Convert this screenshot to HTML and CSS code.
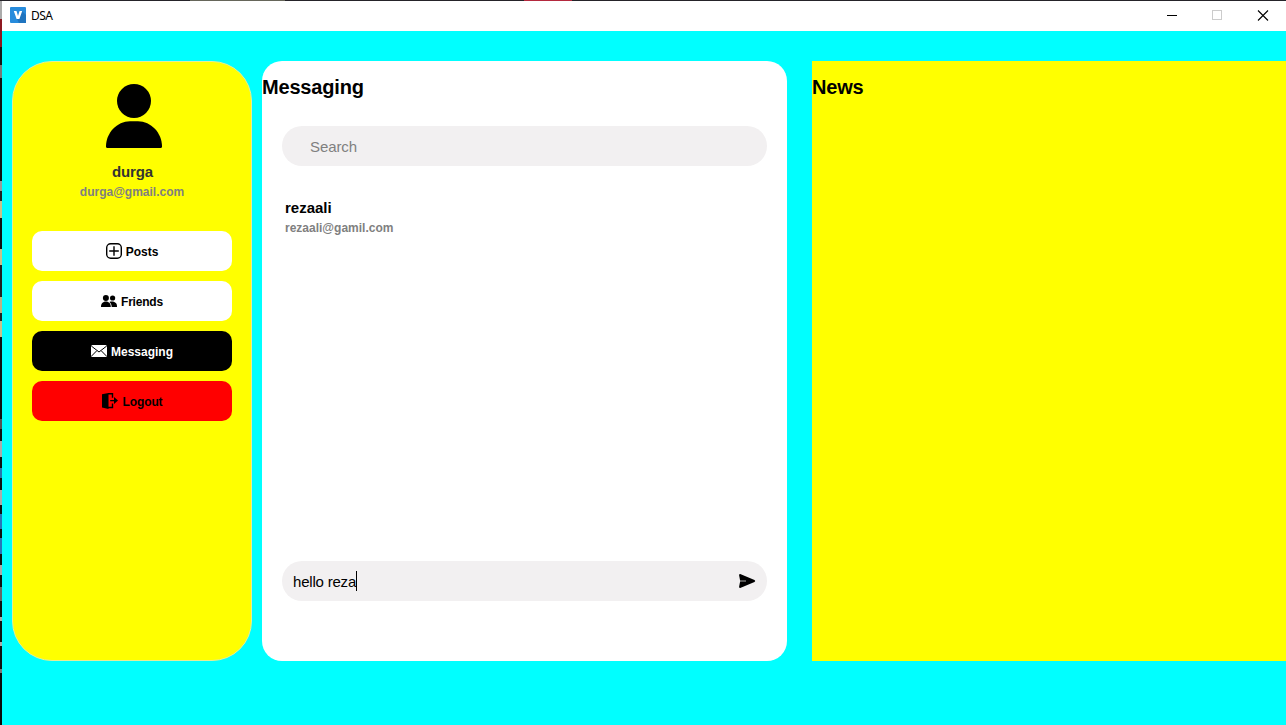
FILE: index.html
```html
<!DOCTYPE html>
<html lang="en">
<head>
<meta charset="utf-8">
<title>DSA</title>
<link rel="stylesheet" href="styles.css">
</head>
<body>
<div class="desktop">
  <div class="desktop-top"></div>
  <div class="row">
    <div class="desktop-left"></div>
    <div class="window">
      <header class="titlebar">
        <svg class="app-icon" width="16" height="16" viewBox="0 0 16 16"><rect width="16" height="16" rx="1" fill="#268bdc"/><path d="M12 4l4 4v8H9l-2-4z" fill="#1f74bf"/><path d="M3.800 4h2.700L8 9l1.600-5h2.600L9.400 12H6.600z" fill="#fff"/></svg>
        <span class="app-name">DSA</span>
        <svg class="controls" width="138" height="30" viewBox="0 0 138 30" shape-rendering="crispEdges"><path d="M19 14.5h10" stroke="#000"/><rect x="64.5" y="9.5" width="9" height="9" fill="none" stroke="#ccc"/><path d="M110 9.5l10 10M120 9.5l-10 10" stroke="#000" stroke-width="1.1" shape-rendering="auto"/></svg>
      </header>
      <main class="content">
        <aside class="sidebar">
          <svg class="avatar" width="56" height="64" viewBox="0 0 56 64"><circle cx="28" cy="17" r="17"/><path d="M0 62.5C0 49 11 37.3 24 37.3h8C45 37.3 56 49 56 62.5Q56 64 54.5 64h-53Q0 64 0 62.5z"/></svg>
          <div class="user-name">durga</div>
          <div class="user-mail">durga@gmail.com</div>
          <nav class="menu">
            <button class="item"><svg width="16" height="16" viewBox="0 0 16 16" fill="none" stroke="#000"><rect x=".7" y=".7" width="14.6" height="14.6" rx="4" stroke-width="1.4"/><path d="M8 3.2v9.6M3.2 8h9.6" stroke-width="1.4"/></svg><span class="label">Posts</span></button>
            <button class="item friends"><svg width="16" height="16" viewBox="0 0 16 16"><circle cx="4.900" cy="5" r="3"/><circle cx="11.600" cy="5" r="2.600"/><path d="M0 14c0-3 1.700-5.400 4.900-5.400S9.800 11 9.800 14zM10.700 14c0-2.200-.8-4-2.200-5.100 4-1 7.500.6 7.500 4.300v.8z"/></svg><span class="label">Friends</span></button>
            <button class="item active"><svg width="16" height="16" viewBox="0 0 16 16"><rect y="2" width="16" height="12" rx="1.5" fill="#fff"/><path d="M.3 3l7.700 6 7.700-6M.3 13.300l5.500-5.600M15.700 13.300l-5.500-5.600" fill="none" stroke="#000" stroke-width="1"/></svg><span class="label">Messaging</span></button>
            <button class="item logout"><svg width="16" height="16" viewBox="0 0 16 16"><path d="M0 1.200L6.500 0v16L0 14.500z"/><path d="M6 .8h4.500v4M6 14.500h4.500v-4" fill="none" stroke="#000" stroke-width="1.400"/><path d="M8.200 6.900H12V4l4 3.500-4 3.500V8.300H8.200z"/></svg><span class="label">Logout</span></button>
          </nav>
        </aside>
        <section class="messaging">
          <h1 class="heading">Messaging</h1>
          <div class="search">Search</div>
          <div class="contact">
            <div class="contact-name">rezaali</div>
            <div class="contact-mail">rezaali@gamil.com</div>
          </div>
          <div class="composer">
            <span class="draft">hello reza</span><span class="caret"></span>
            <svg class="send" width="17" height="14" viewBox="0 0 17 14"><path d="M1.200.1L15.500 6Q17 7 15.500 8L1.200 13.900Q.1 14 .1 12.700L1.200 7 .1 1.300Q.1 0 1.200.1z"/><path d="M1 7h6" stroke="#aaa"/></svg>
          </div>
        </section>
        <section class="news"><h1 class="heading">News</h1></section>
      </main>
    </div>
  </div>
</div>
</body>
</html>
```

FILE: styles.css
```css
* { box-sizing: border-box; }
body { margin: 0; font-family: "Liberation Sans", Arial, sans-serif; overflow: hidden; }
.desktop { width: 1286px; height: 725px; display: flex; flex-direction: column; }
.desktop-top { height: 1px; background: linear-gradient(90deg, #252329 190px, #66665a 190px 285px, #252329 285px 524px, #b4293e 524px 572px, #252329 572px); }
.row { flex: 1; display: flex; }
.desktop-left { width: 2px; background: linear-gradient(#aaa 0 18px, #8e1820 18px 46px, #151515 46px 64px, #777 64px 77px, #111 77px 180px, #999 180px 190px, #222 190px 200px, #c8c08a 200px 217px, #111 217px 248px, #c8c08a 248px 264px, #222 264px 296px, #bbb085 296px 312px, #222 312px 320px, #c8c08a 320px 336px, #111 336px 418px, #555 418px 428px, #111 428px 440px, #aaa 440px 456px, #111 456px 467px, #2876ad 467px 477px, #111 477px 489px, #aaa 489px 504px, #111 504px 513px, #2876b8 513px 528px, #111 528px 537px, #2876b8 537px 553px, #111 553px 564px, #aaa 564px 574px, #111 574px 586px, #666 586px 600px, #111 600px 616px, #aaa 616px 620px, #111 620px 641px, #aaa 641px 645px, #111 645px 668px, #777 668px 672px, #0b0b0b 672px); }
.window { flex: 1; display: flex; flex-direction: column; background: #0ff; }
.titlebar { height: 30px; display: flex; align-items: center; padding-left: 8px; background: #fff; }
.app-icon { margin-top: -2px; }
.app-name { margin-left: 5px; font: 12px/16px "Noto Sans", sans-serif; letter-spacing: -.5px; }
.controls { margin-left: auto; }
.content { display: flex; padding: 30px 0 0 10px; }
.sidebar { width: 240px; height: 600px; display: flex; flex-direction: column; align-items: center; padding-top: 22px; border: 1px solid #e3ee9b; border-radius: 40px; background: #ff0; }
.avatar { margin-left: 4px; }
.user-name { margin-top: 15px; padding-left: 1px; font-size: 15px; font-weight: bold; line-height: 18px; letter-spacing: -.15px; color: #333; }
.user-mail { margin-top: 4px; font-size: 12px; font-weight: bold; line-height: 14px; color: gray; }
.menu { display: flex; flex-direction: column; gap: 10px; margin-top: 32px; }
.item { width: 200px; height: 40px; display: flex; align-items: center; justify-content: center; gap: 4px; padding: 0; border: 0; border-radius: 10px; background: #fff; color: #000; font: bold 12px "Liberation Sans", Arial, sans-serif; }
.label { padding-top: 2px; }
.friends .label { letter-spacing: -.2px; }
.active { background: #000; color: #fff; }
.logout { padding-left: 1px; background: #f00; }
.logout .label { letter-spacing: -.1px; }
.messaging { width: 525px; height: 600px; display: flex; flex-direction: column; margin-left: 10px; padding-top: 14px; border-radius: 20px; background: #fff; }
.heading { margin: 0; font-size: 20px; line-height: 24px; letter-spacing: -.18px; }
.search { height: 40px; margin: 27px 20px 0; padding-left: 28px; border-radius: 20px; background: #f2f0f1; color: gray; font-size: 15px; line-height: 41px; letter-spacing: -.1px; }
.contact { margin: 33px 0 0 23px; }
.contact-name { font-size: 15px; font-weight: bold; line-height: 18px; }
.contact-mail { margin-top: 4px; font-size: 12px; font-weight: bold; line-height: 14px; color: gray; }
.composer { height: 40px; display: flex; align-items: center; margin: auto 20px 60px; padding: 0 11px; border-radius: 20px; background: #f2f0f1; }
.draft { font-size: 15px; line-height: 18px; padding-top: 1px; letter-spacing: -.2px; }
.caret { width: 1px; height: 20px; background: #000; }
.send { margin-left: auto; }
.news { flex: 1; height: 600px; margin-left: 25px; padding-top: 14px; background: #ff0; }
```
